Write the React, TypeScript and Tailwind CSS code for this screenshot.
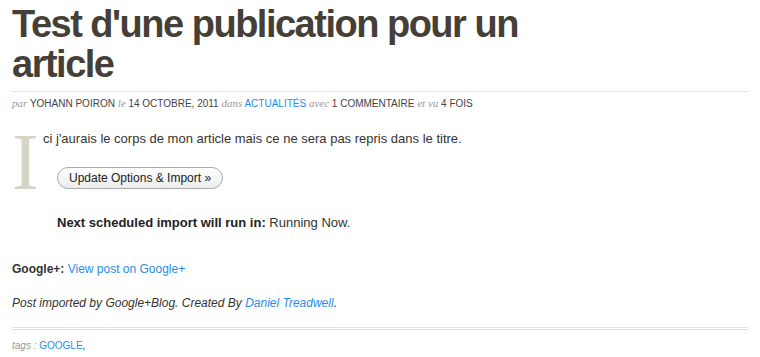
export default function App() {
  return (
    <div className="min-h-[357px] bg-white px-3 font-['Liberation_Sans',Arial,sans-serif] text-[#333]">
      <h1 className="pt-[4px] text-[38px] font-bold leading-[40px] tracking-[-1.5px] text-[#453f37]">
        Test d'une publication pour un
        <br />
        article
      </h1>
      <div className="mt-[7px] border-t border-[#e3e3e3] pt-[4px] text-[10px] uppercase leading-[14px] text-[#444]">
        <em className="font-['Liberation_Serif',serif] text-[11px] normal-case text-[#999]">par</em> YOHANN POIRON{" "}
        <em className="font-['Liberation_Serif',serif] text-[11px] normal-case text-[#999]">le</em> 14 OCTOBRE, 2011{" "}
        <em className="font-['Liberation_Serif',serif] text-[11px] normal-case text-[#999]">dans</em>{" "}
        <a className="text-[#2a8ee6]">ACTUALITÉS</a>{" "}
        <em className="font-['Liberation_Serif',serif] text-[11px] normal-case text-[#999]">avec</em> 1 COMMENTAIRE{" "}
        <em className="font-['Liberation_Serif',serif] text-[11px] normal-case text-[#999]">et vu</em> 4 FOIS
      </div>

      <div className="mt-[19px] flex">
        <span className="-mt-[8px] mr-[6px] h-[62px] w-[25px] font-['Liberation_Serif',serif] text-[80px] leading-[80px] text-[#d6d4c7]">
          I
        </span>
        <div className="flex-1">
          <p className="text-[13px] leading-[18px]">
            ci j'aurais le corps de mon article mais ce ne sera pas repris dans le titre.
          </p>
          <div className="ml-[14px] mt-[17px]">
            <button
              type="button"
              className="h-[22px] rounded-full border border-[#a9a9a9] bg-gradient-to-b from-white to-[#ececec] px-[11px] text-[12px] leading-[20px] text-[#222]"
            >
              Update Options &amp; Import »
            </button>
          </div>
          <p className="ml-[14px] mt-[25px] text-[13px] leading-[18px]">
            <strong className="text-[#222]">Next scheduled import will run in:</strong> Running Now.
          </p>
        </div>
      </div>

      <p className="mt-[29px] text-[12px] leading-[16px]">
        <strong>Google+:</strong> <a className="text-[#2a8ee6]">View post on Google+</a>
      </p>
      <p className="mt-[18px] text-[12px] italic leading-[16px]">
        Post imported by Google+Blog. Created By <a className="text-[#2a8ee6]">Daniel Treadwell</a>.
      </p>

      <div className="mt-[16px] border-t-[3px] border-double border-[#e0e0e0] pt-[9px] text-[10px] leading-[14px]">
        <em className="text-[#999]">tags :</em> <a className="text-[#2a8ee6]">GOOGLE</a>,
      </div>
    </div>
  );
}
